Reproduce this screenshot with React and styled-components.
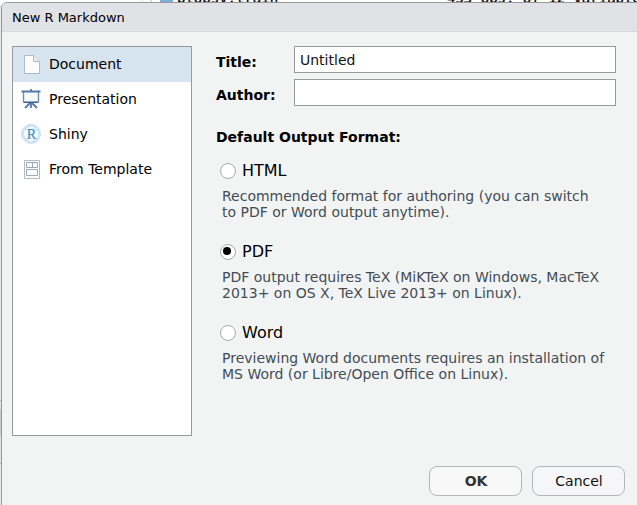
import React from "react";
import styled, { createGlobalStyle } from "styled-components";

const Global = createGlobalStyle`
  * { box-sizing: border-box; }
  body { margin: 0; background: #fff; overflow: hidden; font-family: "DejaVu Sans", sans-serif; color: #000; }
`;

const Page = styled.div`
  position: relative;
  width: 637px;
  height: 505px;
  overflow: hidden;
`;

const Workspace = styled.div`
  display: grid;
  grid-template-columns: 142px 10px 295px 190px;
  height: 505px;
  background: linear-gradient(#fff 0 5px, #e6e8ea 5px 400px, #b4b6b8 400px 401px, #e2e4e6 401px 409px, #c6c8ca 409px 436px, #e2e4e6 436px 463px, #b4b6b8 463px 464px, #e9ebec 464px);
`;

const Gutter = styled.div`
  grid-column: 2;
  height: 2px;
  border-left: 1px solid #ddd;
  border-right: 2px solid #ddd;
`;

const FileCell = styled.div`
  display: flex;
  height: 3px;
  padding-left: 8px;
  gap: 4px;
  overflow: hidden;
`;

const FileIcon = styled.i`
  width: 13px;
  height: 2px;
  background: #7db0dc;
`;

const MonoText = styled.span`
  margin-top: -10px;
  font: 14px/16px "DejaVu Sans Mono", monospace;
  white-space: nowrap;
  -webkit-text-stroke: 0.3px #000;
`;

const ValueCell = styled.div`
  display: flex;
  height: 3px;
  overflow: hidden;
`;

const Dialog = styled.section`
  position: absolute;
  left: 1px;
  top: 2px;
  width: 660px;
  height: 530px;
  border: 1px solid #999;
  border-radius: 6px;
  background: #f2f4f4;
  overflow: hidden;
`;

const TitleBar = styled.header`
  height: 29px;
  padding-left: 10px;
  border-bottom: 1px solid #d6d9dd;
  background: #e1e2e6;
  font-size: 13px;
  line-height: 29px;
`;

const Content = styled.div`
  display: flex;
  gap: 24px;
  padding: 14px 0 0 10px;
`;

const TypeList = styled.nav`
  width: 180px;
  height: 390px;
  border: 1px solid #999;
  background: #fff;
`;

const TypeItem = styled.div`
  display: flex;
  align-items: center;
  height: 35px;
  padding: 0 0 1px 8px;
  gap: 8px;
  font-size: 14px;
  line-height: 16px;
  background: ${(p) => (p.$selected ? "#d6e4f0" : "#fff")};

  svg { width: 20px; height: 22px; flex: none; }
`;

const Form = styled.div`
  width: 400px;
`;

const Field = styled.label`
  display: grid;
  grid-template-columns: 78px 322px;
  align-items: center;
  height: 27px;
  margin-bottom: 6px;
  font-size: 14px;
  font-weight: bold;
`;

const FieldName = styled.span`
  padding-top: 5px;
`;

const Input = styled.input`
  height: 27px;
  padding: 0 5px;
  border: 1px solid #999;
  background: #fff;
  font: 14px "DejaVu Sans", sans-serif;
  color: #111;
  outline: none;
`;

const Heading = styled.h2`
  margin: 21px 0 14px;
  font-size: 14px;
  line-height: 20px;
`;

const Option = styled.div`
  height: 81px;
`;

const Choice = styled.label`
  display: flex;
  align-items: center;
  height: 20px;
  padding-left: 4px;
  gap: 6px;
  font-size: 16px;
  line-height: 18px;
`;

const Radio = styled.span`
  display: flex;
  width: 16px;
  height: 16px;
  padding: 2px 0 0 2px;
  border: 1px solid #aaa;
  border-radius: 50%;
  background: #fff;

  &::after {
    content: "";
    width: 8px;
    height: 8px;
    border-radius: 50%;
    background: ${(p) => (p.$checked ? "#000" : "transparent")};
  }
`;

const Hint = styled.p`
  margin: 7px 0 0 6px;
  font-size: 14px;
  line-height: 16px;
  color: #434c54;
  white-space: nowrap;
`;

const Actions = styled.footer`
  display: flex;
  gap: 10px;
  padding: 30px 0 0 427px;
`;

const Button = styled.button`
  width: 93px;
  height: 30px;
  padding: 0 0 0 1px;
  border: 1px solid #b5b6b8;
  border-radius: 8px;
  background: ${(p) => (p.$primary ? "#f8f8f8" : "#f6f6f8")};
  font: ${(p) => (p.$primary ? "bold" : "normal")} 14px "DejaVu Sans", sans-serif;
  color: ${(p) => (p.$primary ? "#333" : "#111")};
`;

const DocumentIcon = () => (
  <svg viewBox="0 0 20 22">
    <path d="M3.5 2.5h9l6 6v12h-15z" fill="#fcfcfd" stroke="#b3bac2" />
    <path d="M12.5 2.5v6h6" fill="#eceff2" stroke="#b3bac2" />
  </svg>
);

const PresentationIcon = () => (
  <svg viewBox="0 0 20 22" fill="none" stroke="#5478ac">
    <path d="M2.5 4v10h15V4" fill="#f7fafc" stroke="#6d8fb5" strokeWidth="1.4" />
    <path d="M.5 3.5h19" strokeWidth="2" />
    <path d="M10 1v2M10 14v6M9 15l-5 5M11 15l5 5" strokeWidth="1.8" />
    <path d="M3 14.5h14" stroke="#3f6292" />
  </svg>
);

const ShinyIcon = () => (
  <svg viewBox="0 0 20 22">
    <g fill="none" stroke="#b7d4e9" strokeWidth=".7">
      <circle cx="10" cy="11" r="9.6" fill="#f7fbfd" strokeDasharray="2 .7" />
      <path d="M10 1.5l7 4 2 7-4 6-7 1-6-5-1-6 4-5zM6 3l8 0 4 5-1 8-6 4-7-3-2-8z" />
      <path d="M10 1.5L6 5 1 8.5M14 3l-1 3 5 2M2 14l4 2 2 3.5M17 16l-3 0-3 4" />
    </g>
    <text x="10.3" y="15.5" textAnchor="middle" fontFamily="Liberation Serif, serif" fontSize="14" fill="#3490c8" stroke="#3490c8" strokeWidth=".2">R</text>
  </svg>
);

const TemplateIcon = () => (
  <svg viewBox="0 0 20 22" fill="#fbfcfd" stroke="#b3bac2">
    <path d="M3.5 2.5h15v18h-15z" />
    <path d="M5.5 4.5h11v5h-11zM11.5 4.5v5M5.5 11.5h11v6h-11z" stroke="#a0a9b3" />
  </svg>
);

const types = [
  ["Document", DocumentIcon],
  ["Presentation", PresentationIcon],
  ["Shiny", ShinyIcon],
  ["From Template", TemplateIcon],
];

const formats = [
  ["HTML", "Recommended format for authoring (you can switch", "to PDF or Word output anytime)."],
  ["PDF", "PDF output requires TeX (MiKTeX on Windows, MacTeX", "2013+ on OS X, TeX Live 2013+ on Linux)."],
  ["Word", "Previewing Word documents requires an installation of", "MS Word (or Libre/Open Office on Linux)."],
];

export default function App() {
  return (
    <Page>
      <Global />
      <Workspace>
        <Gutter />
        <FileCell><FileIcon /><MonoText>ptobsv.train</MonoText></FileCell>
        <ValueCell><MonoText>455 obs. of 12 variables</MonoText></ValueCell>
      </Workspace>
      <Dialog>
        <TitleBar>New R Markdown</TitleBar>
        <Content>
          <TypeList>
            {types.map(([name, Icon], i) => (
              <TypeItem key={name} $selected={i === 0}><Icon />{name}</TypeItem>
            ))}
          </TypeList>
          <Form>
            <Field><FieldName>Title:</FieldName><Input defaultValue="Untitled" /></Field>
            <Field><FieldName>Author:</FieldName><Input /></Field>
            <Heading>Default Output Format:</Heading>
            {formats.map(([name, first, second]) => (
              <Option key={name}>
                <Choice><Radio $checked={name === "PDF"} />{name}</Choice>
                <Hint>{first}<br />{second}</Hint>
              </Option>
            ))}
          </Form>
        </Content>
        <Actions>
          <Button $primary>OK</Button>
          <Button>Cancel</Button>
        </Actions>
      </Dialog>
    </Page>
  );
}
